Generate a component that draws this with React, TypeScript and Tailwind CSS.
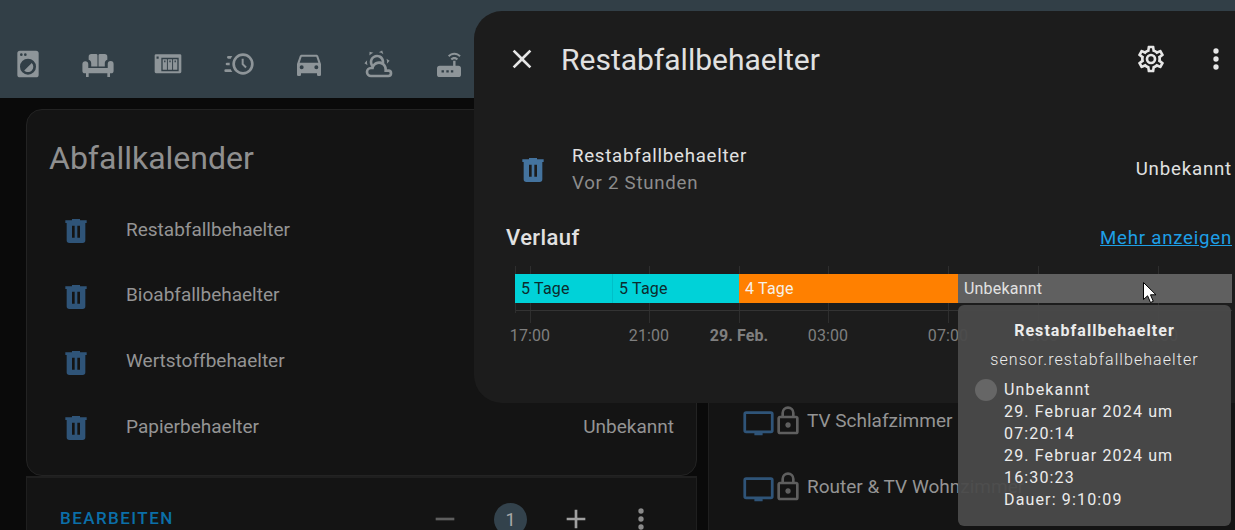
const P = {
  trash: "M9,3V4H4V6H5V19A2,2 0 0,0 7,21H17A2,2 0 0,0 19,19V6H20V4H15V3H9M9,8H11V17H9V8M13,8H15V17H13V8Z",
  close: "M19,6.41L17.59,5L12,10.59L6.41,5L5,6.41L10.59,12L5,17.59L6.41,19L12,13.41L17.59,19L19,17.59L13.41,12L19,6.41Z",
  cog: "M12,8A4,4 0 0,1 16,12A4,4 0 0,1 12,16A4,4 0 0,1 8,12A4,4 0 0,1 12,8M12,10A2,2 0 0,0 10,12A2,2 0 0,0 12,14A2,2 0 0,0 14,12A2,2 0 0,0 12,10M10,22C9.75,22 9.54,21.82 9.5,21.58L9.13,18.93C8.5,18.68 7.96,18.34 7.44,17.94L4.95,18.95C4.73,19.03 4.46,18.95 4.34,18.73L2.34,15.27C2.21,15.05 2.27,14.78 2.46,14.63L4.57,12.97L4.5,12L4.57,11L2.46,9.37C2.27,9.22 2.21,8.95 2.34,8.73L4.34,5.27C4.46,5.05 4.73,4.96 4.95,5.05L7.44,6.05C7.96,5.66 8.5,5.32 9.13,5.07L9.5,2.42C9.54,2.18 9.75,2 10,2H14C14.25,2 14.46,2.18 14.5,2.42L14.87,5.07C15.5,5.32 16.04,5.66 16.56,6.05L19.05,5.05C19.27,4.96 19.54,5.05 19.66,5.27L21.66,8.73C21.79,8.95 21.73,9.22 21.54,9.37L19.43,11L19.5,12L19.43,13L21.54,14.63C21.73,14.78 21.79,15.05 21.66,15.27L19.66,18.73C19.54,18.95 19.27,19.04 19.05,18.95L16.56,17.95C16.04,18.34 15.5,18.68 14.87,18.93L14.5,21.58C14.46,21.82 14.25,22 14,22H10M11.25,4L10.88,6.61C9.68,6.86 8.62,7.5 7.85,8.39L5.44,7.35L4.69,8.65L6.8,10.2C6.4,11.37 6.4,12.64 6.8,13.8L4.68,15.36L5.43,16.66L7.86,15.62C8.63,16.5 9.68,17.14 10.87,17.38L11.24,20H12.76L13.13,17.39C14.32,17.14 15.37,16.5 16.14,15.62L18.57,16.66L19.32,15.36L17.2,13.81C17.6,12.64 17.6,11.37 17.2,10.2L19.31,8.65L18.56,7.35L16.15,8.39C15.38,7.5 14.32,6.86 13.12,6.62L12.75,4H11.25Z",
  dots: "M12,16A2,2 0 0,1 14,18A2,2 0 0,1 12,20A2,2 0 0,1 10,18A2,2 0 0,1 12,16M12,10A2,2 0 0,1 14,12A2,2 0 0,1 12,14A2,2 0 0,1 10,12A2,2 0 0,1 12,10M12,4A2,2 0 0,1 14,6A2,2 0 0,1 12,8A2,2 0 0,1 10,6A2,2 0 0,1 12,4Z",
  minus: "M19,13H5V11H19V13Z",
  plus: "M19,13H13V19H11V13H5V11H11V5H13V11H19V13Z",
  washer: "M14.83,11.17C16.39,12.73 16.39,15.27 14.83,16.83C13.27,18.39 10.73,18.39 9.17,16.83L14.83,11.17M6,2H18A2,2 0 0,1 20,4V20A2,2 0 0,1 18,22H6A2,2 0 0,1 4,20V4A2,2 0 0,1 6,2M7,4A1,1 0 0,0 6,5A1,1 0 0,0 7,6A1,1 0 0,0 8,5A1,1 0 0,0 7,4M10,4A1,1 0 0,0 9,5A1,1 0 0,0 10,6A1,1 0 0,0 11,5A1,1 0 0,0 10,4M12,8A6,6 0 0,0 6,14A6,6 0 0,0 12,20A6,6 0 0,0 18,14A6,6 0 0,0 12,8Z",
  sofa: "M7,4.5H10.6A1,1 0 0 1 11.6,5.5V13.8H6.9V11.5C6.9,10 6.2,9.2 5,8.8V6.5A2,2 0 0 1 7,4.5ZM17,4.5H13.4A1,1 0 0 0 12.4,5.5V13.8H17.1V11.5C17.1,10 17.8,9.2 19,8.8V6.5A2,2 0 0 0 17,4.5ZM2.5,10A2.2,2.2 0 0 1 4.7,12V15H19.3V12A2.2,2.2 0 0 1 23.7,12V17A2,2 0 0 1 21.7,19H21V21.8H19V19H5V21.8H3V19H2.3A2,2 0 0 1 .3,17V12A2.2,2.2 0 0 1 2.5,10Z",
  nas: "M3,4.7H21A1,1 0 0 1 22,5.7V17.9A1,1 0 0 1 21,18.9H3A1,1 0 0 1 2,17.9V5.7A1,1 0 0 1 3,4.7ZM3.4,6.4V8H5V6.4ZM7,7.4V17.4H20V7.4ZM8,8.4H11.2V16.4H8ZM11.9,8.4H15.1V16.4H11.9ZM15.8,8.4H19V16.4H15.8ZM9.1,9.4V10.6H10.1V9.4ZM13,9.4V10.6H14V9.4ZM16.9,9.4V10.6H17.9V9.4Z",
  clock: "M15,4A8,8 0 0,1 23,12A8,8 0 0,1 15,20A8,8 0 0,1 7,12A8,8 0 0,1 15,4M15,6A6,6 0 0,0 9,12A6,6 0 0,0 15,18A6,6 0 0,0 21,12A6,6 0 0,0 15,6M14,8H15.5V11.78L17.83,14.11L16.77,15.17L14,12.4V8M2,18A1,1 0 0,1 1,17A1,1 0 0,1 2,16H5.83C6.14,16.71 6.54,17.38 7,18H2M3,13A1,1 0 0,1 2,12A1,1 0 0,1 3,11H5.05L5,12L5.05,13H3M4,8A1,1 0 0,1 3,7A1,1 0 0,1 4,6H7C6.54,6.62 6.14,7.29 5.83,8H4Z",
  car: "M5,11L6.5,6.5H17.5L19,11H5M17.5,16A1.5,1.5 0 0,1 16,14.5A1.5,1.5 0 0,1 17.5,13A1.5,1.5 0 0,1 19,14.5A1.5,1.5 0 0,1 17.5,16M6.5,16A1.5,1.5 0 0,1 5,14.5A1.5,1.5 0 0,1 6.5,13A1.5,1.5 0 0,1 8,14.5A1.5,1.5 0 0,1 6.5,16M18.92,6C18.72,5.42 18.16,5 17.5,5H6.5C5.84,5 5.28,5.42 5.08,6L3,12V20A1,1 0 0,0 4,21H5A1,1 0 0,0 6,20V19H18V20A1,1 0 0,0 19,21H20A1,1 0 0,0 21,20V12L18.92,6Z",
  weather: "M12.74,5.47C15.1,6.5 16.35,9.03 15.92,11.46C17.19,12.56 18,14.19 18,16V16.17C18.31,16.06 18.65,16 19,16A3,3 0 0,1 22,19A3,3 0 0,1 19,22H6A4,4 0 0,1 2,18A4,4 0 0,1 6,14H6.27C5,12.45 4.6,10.24 5.5,8.26C6.72,5.5 9.97,4.24 12.74,5.47M11.93,7.3C10.16,6.5 8.09,7.31 7.31,9.07C6.85,10.09 6.93,11.25 7.41,12.17C8.5,10.83 10.16,10 12,10C12.7,10 13.38,10.12 14,10.34C13.94,9.06 13.18,7.86 11.93,7.3M13.55,3.64C13,3.4 12.45,3.23 11.88,3.12L14.37,1.82L15.27,4.71C14.76,4.29 14.19,3.93 13.55,3.64M6.09,4.44C5.6,4.79 5.17,5.19 4.8,5.63L4.91,2.82L7.87,3.5C7.25,3.71 6.65,4.03 6.09,4.44M18,9.71C17.91,9.12 17.78,8.55 17.59,8L19.97,9.5L17.92,11.73C18.03,11.08 18.05,10.4 18,9.71M3.04,11.3C3.11,11.9 3.24,12.47 3.43,13L1.06,11.5L3.1,9.28C3,9.93 2.97,10.61 3.04,11.3M19,18H16V16A4,4 0 0,0 12,12A4,4 0 0,0 8,16H6A2,2 0 0,0 4,18A2,2 0 0,0 6,20H19A1,1 0 0,0 20,19A1,1 0 0,0 19,18Z",
  router: "M11.2,5.6C12.5,4.3 14.2,3.5 16,3.5C17.8,3.5 19.5,4.3 20.8,5.6L19.7,6.7C18.7,5.7 17.4,5.1 16,5.1C14.6,5.1 13.3,5.7 12.3,6.7ZM13.2,8C13.9,7.3 14.9,6.8 16,6.8C17.1,6.8 18.1,7.3 18.8,8L17.7,9.1C17.3,8.7 16.7,8.4 16,8.4C15.3,8.4 14.7,8.7 14.3,9.1ZM5,13.3H15.1V9.6H16.9V13.3H19A2,2 0 0 1 21,15.3V19.8A2,2 0 0 1 19,21.8H5A2,2 0 0 1 3,19.8V15.3A2,2 0 0 1 5,13.3ZM6.4,16.6V18.4H8.2V16.6ZM10,16.6V18.4H11.8V16.6ZM13.4,16.6V18.4H15.2V16.6Z",
  tv: "M21,17H3V5H21V17M21,3H3A2,2 0 0,0 1,5V17A2,2 0 0,0 3,19H9V20.5H15V19H21A2,2 0 0,0 23,17V5A2,2 0 0,0 21,3Z",
  lock: "M12,17C10.89,17 10,16.1 10,15C10,13.89 10.89,13 12,13A2,2 0 0,1 14,15A2,2 0 0,1 12,17M18,20V10H6V20H18M18,8A2,2 0 0,1 20,10V20A2,2 0 0,1 18,22H6C4.89,22 4,21.1 4,20V10C4,8.89 4.89,8 6,8H7V6A5,5 0 0,1 12,1A5,5 0 0,1 17,6V8H18M12,3A3,3 0 0,0 9,6V8H15V6A3,3 0 0,0 12,3Z",
};

function Icon({ d, className }: { d: string; className?: string }) {
  return (
    <svg viewBox="0 0 24 24" className={className} fill="currentColor" aria-hidden="true">
      <path d={d} fillRule="evenodd" />
    </svg>
  );
}

const navIcons = [P.washer, P.sofa, P.nas, P.clock, P.car, P.weather, P.router];
const bins: [string, string][] = [
  ["Restabfallbehaelter", ""],
  ["Bioabfallbehaelter", ""],
  ["Wertstoffbehaelter", ""],
  ["Papierbehaelter", "Unbekannt"],
];
const ticks = [
  { x: 15, label: "17:00" },
  { x: 134, label: "21:00" },
  { x: 224, label: "29. Feb.", bold: true },
  { x: 313, label: "03:00" },
  { x: 433, label: "07:00" },
  { x: 523, label: "10:00" },
  { x: 643, label: "14:00" },
];

function Chart() {
  return (
    <div className="relative h-[80px] w-[717px]">
      {ticks.map((t) => (
        <div key={t.x} className="absolute top-0 h-[57px] w-px bg-[#2e2e2e]" style={{ left: t.x }} />
      ))}
      <div className="absolute top-[44px] left-0 h-px w-full bg-[#333333]" />
      <div className="absolute top-0 left-0 h-[47px] w-px bg-[#2e2e2e]" />
      {ticks.map((t) => (
        <span
          key={t.label}
          className={`absolute top-[60px] -translate-x-1/2 text-[16px] leading-[20px] tracking-[0.1px] text-[#7f7f7f] ${t.bold ? "font-bold" : ""}`}
          style={{ left: t.x }}
        >
          {t.label}
        </span>
      ))}
      <div className="absolute top-[8px] left-0 flex h-[29px] w-full text-[16px] leading-[29px] tracking-[0.2px]">
        <div className="w-[98px] border-r border-[#00bfc8] bg-[#00d2d8] pl-[6px] text-[#0c2b2d]">5 Tage</div>
        <div className="w-[126px] bg-[#00d2d8] pl-[6px] text-[#0c2b2d]">5 Tage</div>
        <div className="w-[219px] bg-[#ff8000] pl-[6px] text-[#f6f0e8]">4 Tage</div>
        <div className="flex-1 bg-[#606060] pl-[6px] text-[#e2e2e2]">Unbekannt</div>
      </div>
    </div>
  );
}

function Dialog() {
  return (
    <div className="absolute top-[11px] left-[474px] flex h-[392px] w-[761px] flex-col rounded-l-[28px] bg-[#1c1c1c] pr-[3px] pl-[32px] text-[#e1e1e1]">
      <div className="flex h-[96px] items-center">
        <Icon d={P.close} className="h-[32px] w-[32px] text-[#e6e6e6]" />
        <span className="mt-[2px] ml-[23px] text-[30px] leading-[34px] text-[#e1e1e1]">Restabfallbehaelter</span>
        <Icon d={P.cog} className="mr-[33px] ml-auto h-[32px] w-[32px] text-[#e6e6e6]" />
        <Icon d={P.dots} className="h-[32px] w-[32px] text-[#e6e6e6]" />
      </div>
      <div className="mt-[31px] flex h-[64px] items-center">
        <Icon d={P.trash} className="ml-[11px] h-[32px] w-[32px] text-[#44739e]" />
        <div className="ml-[23px] flex flex-col">
          <span className="text-[18.67px] leading-[27px] tracking-[0.74px] text-[#e1e1e1]">Restabfallbehaelter</span>
          <span className="text-[18.67px] leading-[27px] tracking-[0.74px] text-[#8c8c8c]">Vor 2 Stunden</span>
        </div>
        <span className="mb-[3px] ml-auto text-[18.67px] tracking-[0.8px] text-[#e1e1e1]">Unbekannt</span>
      </div>
      <div className="mt-[22px] flex h-[28px] items-center justify-between">
        <span className="-mt-[2px] text-[22px] font-medium tracking-[0.4px] text-[#e1e1e1]">Verlauf</span>
        <span className="text-[18.67px] tracking-[0.76px] text-[#1e9fe6] underline">Mehr anzeigen</span>
      </div>
      <div className="mt-[14px] ml-[9px]">
        <Chart />
      </div>
    </div>
  );
}

function Tooltip() {
  return (
    <div className="absolute top-[305px] left-[958px] h-[221px] w-[273px] rounded-[6px] bg-[#4a4a4a]/95 px-[17px] pt-[15px] text-[16px] leading-[22px] tracking-[1.15px] text-[#ececec]">
      <div className="text-center font-bold tracking-[1.05px]">Restabfallbehaelter</div>
      <div className="mt-[7px] text-center font-light tracking-[1.05px]">sensor.restabfallbehaelter</div>
      <div className="mt-[8px] flex">
        <span className="h-[22px] w-[22px] shrink-0 rounded-full bg-[#666666]" />
        <div className="ml-[7px]">
          <div>Unbekannt</div>
          <div>29. Februar 2024 um</div>
          <div>07:20:14</div>
          <div>29. Februar 2024 um</div>
          <div>16:30:23</div>
          <div>Dauer: 9:10:09</div>
        </div>
      </div>
    </div>
  );
}

export default function App() {
  return (
    <div className="relative h-[530px] w-[1235px] overflow-hidden bg-[#0a0a0a] font-['Roboto',sans-serif]">
      <header className="flex h-[98px] items-end bg-[#323f47] pb-[18px]">
        <div className="-ml-[7px] flex">
          {navIcons.map((d, i) => (
            <div key={i} className="flex w-[70.2px] justify-center text-[#8e9599]">
              <Icon d={d} className="h-[32px] w-[32px]" />
            </div>
          ))}
        </div>
      </header>

      <main className="flex">
        <div className="mt-[11px] ml-[26px] flex w-[671px] flex-col">
          <section className="h-[367px] rounded-[16px] border border-[#232323] bg-[#141414] pr-[22px] pl-[33px]">
            <h1 className="-ml-[11px] flex h-[87px] items-center pt-[9px] text-[32px] font-normal text-[#8f8f8f]">Abfallkalender</h1>
            {bins.map(([name, value]) => (
              <div key={name} className="flex h-[65.7px] items-center text-[19px] text-[#949494]">
                <Icon d={P.trash} className="mt-[3px] h-[32px] w-[32px] text-[#2f5478]" />
                <span className="ml-[34px]">{name}</span>
                <span className="ml-auto">{value}</span>
              </div>
            ))}
          </section>
          <section className="flex h-[60px] items-center border-x border-t-2 border-[#1f1f1f] bg-[#141414] pt-[24px] pr-[39px] pl-[33px]">
            <span className="text-[17px] font-medium tracking-[1.45px] text-[#0b6fa8]">BEARBEITEN</span>
            <div className="ml-auto flex items-center text-[#8a8a8a]">
              <Icon d={P.minus} className="h-[32px] w-[32px] text-[#5e5e5e]" />
              <div className="ml-[33px] flex h-[33px] w-[33px] items-center justify-center rounded-full bg-[#33424c] text-[18px] text-[#a8a8a8]">1</div>
              <Icon d={P.plus} className="ml-[33px] h-[32px] w-[32px] text-[#a0a0a0]" />
              <Icon d={P.dots} className="ml-[33px] h-[32px] w-[32px] text-[#8a8a8a]" />
            </div>
          </section>
        </div>

        <div className="mt-[11px] ml-[11px] h-[421px] flex-1 border-l border-[#1f1f1f] bg-[#141414] pt-[279px] pl-[33px]">
          {["TV Schlafzimmer", "Router & TV Wohnzimmer"].map((name) => (
            <div key={name} className="flex h-[66px] items-center text-[19px] text-[#949494]">
              <Icon d={P.tv} className="mt-[5px] h-[33px] w-[33px] text-[#2f5478]" />
              <Icon d={P.lock} className="-ml-[3px] h-[32px] w-[32px] text-[#5f5f5f]" />
              <span className="ml-[3px]">{name}</span>
            </div>
          ))}
        </div>
      </main>

      <Dialog />
      <Tooltip />

      <svg viewBox="0 0 16 24" className="absolute top-[281px] left-[1141px] h-[24px] w-[16px]">
        <path d="M2.5 1.5V18.5L6.6 14.8L9.5 21.5L12.3 20.3L9.5 13.8H15Z" fill="#ffffff" stroke="#000000" strokeWidth="1" />
      </svg>
    </div>
  );
}
